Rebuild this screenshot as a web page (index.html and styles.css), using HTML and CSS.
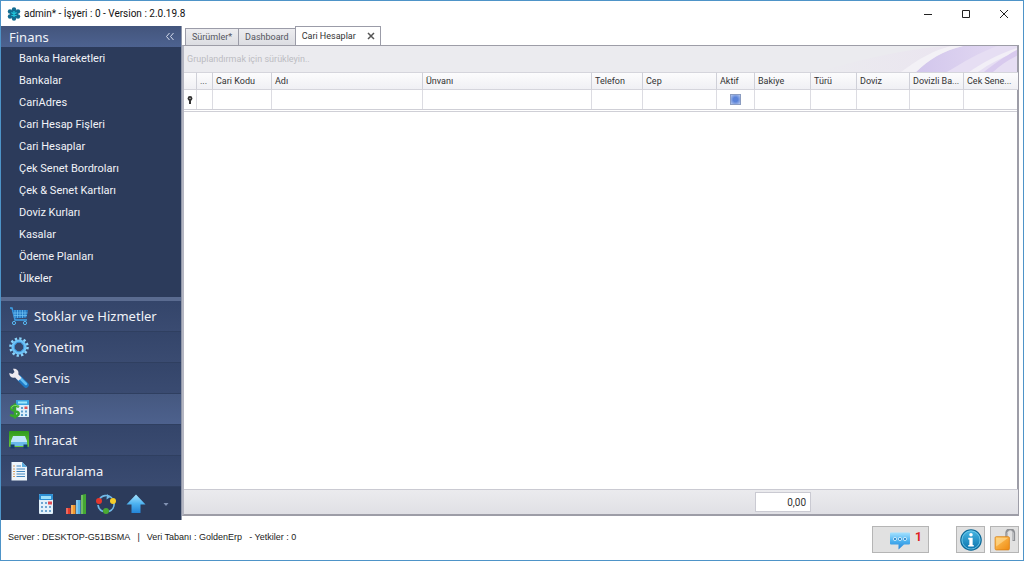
FILE: index.html
```html
<!DOCTYPE html>
<html lang="tr">
<head>
<meta charset="utf-8">
<meta name="viewport" content="width=device-width, initial-scale=1">
<title>admin* - İşyeri : 0 - Version : 2.0.19.8</title>
<link rel="stylesheet" href="styles.css">
</head>
<body>
<svg class="defs" aria-hidden="true">
  <defs>
    <linearGradient id="blue" x1="0" y1="0" x2="0" y2="1"><stop offset="0" stop-color="#a5e2ff"/><stop offset=".5" stop-color="#4db2f0"/><stop offset="1" stop-color="#2384d8"/></linearGradient>
    <linearGradient id="green" x1="0" y1="0" x2="0" y2="1"><stop offset="0" stop-color="#2f9a1c"/><stop offset="1" stop-color="#6cc93c"/></linearGradient>
    <linearGradient id="orange" x1="0" y1="0" x2="1" y2="1"><stop offset="0" stop-color="#ffc964"/><stop offset="1" stop-color="#f08a10"/></linearGradient>
    <linearGradient id="info" x1="0" y1="0" x2="0" y2="1"><stop offset="0" stop-color="#48b8e4"/><stop offset="1" stop-color="#0a72ac"/></linearGradient>
    <symbol id="calc" viewBox="0 0 16 20">
      <rect x="1" y="0" width="14" height="20" rx="1" fill="#e3f1fb"/>
      <rect x="1" y="0" width="14" height="6" rx="1" fill="#2d8fd4"/><rect x="3" y="2" width="10" height="3" fill="#9ee0fa"/>
      <path d="M3 8h2v2H3zM7 8h2v2H7zM3 12h2v2H3zM7 12h2v2H7zM11 12h2v2h-2zM3 16h2v2H3zM7 16h2v2H7zM11 16h2v2h-2z" fill="#6fa6d2"/>
      <path d="M10 7.500h4v3h-4z" fill="#e04a50"/>
    </symbol>
  </defs>
</svg>
<div class="window">
  <header class="titlebar">
    <svg class="logo" viewBox="0 0 14 14" aria-hidden="true"><g fill="#126c91"><circle cx="7" cy="2.500" r="2.200"/><circle cx="7" cy="11.500" r="2.200"/><circle cx="3" cy="4.500" r="2.200"/><circle cx="11" cy="4.500" r="2.200"/><circle cx="3" cy="9.500" r="2.200"/><circle cx="11" cy="9.500" r="2.200"/></g><circle cx="7" cy="7" r="4" fill="#126c91"/><path d="M7 4v6M4.400 5.500l5.200 3M9.600 5.500l-5.200 3" stroke="#20c5da" stroke-width="1.300"/></svg>
    <h1 class="title">admin* - İşyeri : 0 - Version : 2.0.19.8</h1>
    <div class="controls">
      <button class="control" aria-label="Simge durumuna küçült"><svg viewBox="0 0 10 10"><path d="M1 5.500h8"/></svg></button>
      <button class="control" aria-label="Ekranı kapla"><svg viewBox="0 0 10 10"><path d="M1.500 1.500h7v7h-7z"/></svg></button>
      <button class="control" aria-label="Kapat"><svg viewBox="0 0 10 10"><path d="M1 1l8 8M9 1l-8 8"/></svg></button>
    </div>
  </header>

  <div class="workspace">
    <aside class="sidebar">
      <div class="side-head"><h2 class="side-title">Finans</h2><button class="collapse" aria-label="Daralt"><svg viewBox="0 0 10 9"><path d="M4.500 1l-3 3.500 3 3.500M8.500 1l-3 3.500 3 3.500"/></svg></button></div>
      <nav class="side-list">
        <a class="side-link" href="#">Banka Hareketleri</a>
        <a class="side-link" href="#">Bankalar</a>
        <a class="side-link" href="#">CariAdres</a>
        <a class="side-link" href="#">Cari Hesap Fişleri</a>
        <a class="side-link" href="#">Cari Hesaplar</a>
        <a class="side-link" href="#">Çek Senet Bordroları</a>
        <a class="side-link" href="#">Çek &amp; Senet Kartları</a>
        <a class="side-link" href="#">Doviz Kurları</a>
        <a class="side-link" href="#">Kasalar</a>
        <a class="side-link" href="#">Ödeme Planları</a>
        <a class="side-link" href="#">Ülkeler</a>
      </nav>
      <div class="splitter"></div>
      <div class="groups">
        <button class="group"><svg class="group-icon" viewBox="0 0 20 20"><path d="M1 2h2l3 12h12" fill="none" stroke="#3fa3ea" stroke-width="1.400"/><path d="M3.500 4H19l-1.500 7.500-12 1z" fill="#2479c4"/><path d="M6 4v8M8.500 4v8M11 4v8M13.500 4v8M16 4v7.500M4 7h14.500M5 9.500h13" stroke="#72c5f7" stroke-width=".7"/><circle cx="5" cy="17" r="1.600" fill="none" stroke="#58b9f4"/><circle cx="16" cy="17" r="1.600" fill="none" stroke="#58b9f4"/></svg>Stoklar ve Hizmetler</button>
        <button class="group"><svg class="group-icon" viewBox="0 0 20 20"><circle cx="10" cy="10" r="8.500" fill="none" stroke="#8cd4fb" stroke-width="2.600" stroke-dasharray="2.300 2.150"/><circle cx="10" cy="10" r="6" fill="none" stroke="#6cc2f7" stroke-width="3.200"/><circle cx="10" cy="10" r="4.800" fill="none" stroke="#2f86d0" stroke-width=".8"/></svg>Yonetim</button>
        <button class="group"><svg class="group-icon" viewBox="0 0 20 20"><path d="M10 10l7 7" stroke="#1f78c4" stroke-width="5.500" stroke-linecap="round"/><path d="M10.500 9.500l6.500 6.500" stroke="#63bdf2" stroke-width="2.500" stroke-linecap="round"/><path d="M4 .8l1.500 3.300-2 1.800L.3 5C.2 8.500 3 10.500 6 9.600l3.500 3.200 3-3L9.300 6.200C10.300 3 7.500 0 4 .8z" fill="#eeeaf0"/></svg>Servis</button>
        <button class="group selected"><svg class="group-icon" viewBox="0 0 20 20"><path d="M7 1h13v17H7z" fill="#dceefa"/><path d="M7 1h13v5H7z" fill="#38a3e0"/><path d="M9 2.500h9v2H9z" fill="#9ee8fa"/><path d="M12 8h2v2h-2zM12 11.500h2v2h-2zM16 11.500h2v2h-2zM12 15h2v2h-2zM16 15h2v2h-2z" fill="#5b9dce"/><path d="M15.500 7.500h3v2.500h-3z" fill="#e05050"/><path d="M10 8C6.500 5.500 1.500 7 2.200 9.700s7.500 1.800 7.500 4.800-5.500 3.500-8.500 1.300M6 4.500v15" fill="none" stroke="#37a82b" stroke-width="2.500"/><path d="M9.500 7.300C6 5.300 1.800 7 3 9.600" fill="none" stroke="#9be57c" stroke-width=".8"/></svg>Finans</button>
        <button class="group"><svg class="group-icon" viewBox="0 0 20 20"><rect x="0" y="1" width="20" height="16" rx="1" fill="url(#green)"/><path d="M4 6h12l2 5v5H2v-5z" fill="#bfe6fa"/><path d="M2 12h16v4H2z" fill="#69b9e9"/><path d="M1.500 14.500h4v4h-4zM14.500 14.500h4v4h-4z" fill="#163e6a"/></svg>Ihracat</button>
        <button class="group"><svg class="group-icon" viewBox="0 0 20 20"><path d="M2.500 1H13l5 5v13.500H2.500z" fill="#eef5fb"/><path d="M13 1v5h5z" fill="#5daee0"/><path d="M7.500 5H12M7.500 8H16M7.500 10.500H16M7.500 13H16M7.500 15.500H16" stroke="#4387bf" stroke-width="1.200"/><path d="M4 5h2M4 8h2M4 10.500h2M4 13h2M4 15.500h2" stroke="#d39b60" stroke-width="1.200"/></svg>Faturalama</button>
      </div>
      <div class="shortcuts">
        <button class="shortcut" aria-label="Hesap makinesi"><svg viewBox="0 0 20 20"><use href="#calc" x="2" width="16" height="20"/></svg></button>
        <button class="shortcut" aria-label="Raporlar"><svg viewBox="0 0 20 20"><path d="M0 14h4.500v6H0z" fill="#e43829"/><path d="M5 11h4.500v9H5z" fill="#f3982b"/><path d="M10 6h4.500v14H10z" fill="#56b3e9"/><path d="M15 1l5-1v20h-5z" fill="#43a832"/><path d="M1 14v6M6 11v9M11 6v14M16 1v19" stroke="#fff" stroke-opacity=".5"/></svg></button>
        <button class="shortcut" aria-label="Süreçler"><svg viewBox="0 0 20 20"><path d="M3 6a8 8 0 0 1 13-2M18 9a8 8 0 0 1-5 8.500M7 17.500A8 8 0 0 1 2 11" fill="none" stroke="#72b9e7" stroke-width="1.700"/><path d="M11 0l3.500 3-4 2.500z" fill="#72b9e7"/><circle cx="3" cy="7" r="3" fill="#e5372c"/><circle cx="17" cy="7" r="3" fill="#f6cd28"/><circle cx="10" cy="17" r="3" fill="#4aaa33"/></svg></button>
        <button class="shortcut" aria-label="Güncelle"><svg viewBox="0 0 20 20"><path d="M10 .5l9.500 10H14.500V19h-9v-8.500H.5z" fill="url(#blue)"/></svg></button>
        <button class="shortcut more" aria-label="Diğer"><svg viewBox="0 0 20 20"><path d="M7.500 9h5L10 12z" fill="#8292b3"/></svg></button>
      </div>
    </aside>

    <main class="content">
      <div class="tabs" role="tablist">
        <button class="tab" role="tab">Sürümler*</button>
        <button class="tab" role="tab">Dashboard</button>
        <button class="tab active" role="tab" aria-selected="true">Cari Hesaplar<svg class="tab-close" viewBox="0 0 8 8"><path d="M1 1l6 6M7 1l-6 6"/></svg></button>
      </div>
      <section class="panel">
        <div class="group-panel"><span>Gruplandırmak için sürükleyin..</span>
          <svg class="swoosh" viewBox="0 0 200 27" preserveAspectRatio="none" aria-hidden="true">
            <defs><linearGradient id="haze"><stop offset="0" stop-color="#ebebef"/><stop offset="1" stop-color="#eae2f0"/></linearGradient><linearGradient id="violet"><stop offset="0" stop-color="#d2c6ec"/><stop offset="1" stop-color="#e5dcf3"/></linearGradient></defs>
            <path d="M0 27C50 12 90 3 130 0h70v27z" fill="url(#haze)"/>
            <path d="M99 27C112 14 126 5 146 0h54v27z" fill="url(#violet)"/>
            <path d="M99 27C112 14 126 5 146 0h-12C118 4 102 13 84 27z" fill="#f3f1f6"/>
            <path d="M130 27C146 17 160 8 180 0h20v27z" fill="#e6def3"/>
            <path d="M152 27C166 17 180 9 200 2v4C184 12 172 19 161 27z" fill="#f2eff7"/>
            <path d="M167 27C177 19 186 12 200 4v6C190 15 182 21 176 27z" fill="#d8caee"/>
          </svg>
        </div>
        <table class="grid">
          <colgroup><col class="c-mark"><col class="c-dots"><col class="c-code"><col class="c-name"><col class="c-title"><col class="c-phone"><col class="c-cell"><col class="c-active"><col class="c-balance"><col class="c-kind"><col class="c-currency"><col class="c-total"><col class="c-total"></colgroup>
          <thead><tr><th></th><th>...</th><th>Cari Kodu</th><th>Adı</th><th>Ünvanı</th><th>Telefon</th><th>Cep</th><th>Aktif</th><th>Bakiye</th><th>Türü</th><th>Doviz</th><th>Dovizli Ba...</th><th>Cek Sene...</th></tr></thead>
          <tbody><tr><td><svg class="pin" viewBox="0 0 6 8"><circle cx="3" cy="2.500" r="2.400" fill="#333"/><path d="M2 4h2v4H2z" fill="#333"/><circle cx="3" cy="2.300" r=".6" fill="#fff"/></svg></td><td></td><td></td><td></td><td></td><td></td><td></td><td class="check-cell"><input class="check" type="checkbox" aria-label="Aktif"></td><td></td><td></td><td></td><td></td><td></td></tr></tbody>
        </table>
        <div class="rows"></div>
        <table class="grid summary">
          <colgroup><col class="c-mark"><col class="c-dots"><col class="c-code"><col class="c-name"><col class="c-title"><col class="c-phone"><col class="c-cell"><col class="c-active"><col class="c-balance"><col class="c-kind"><col class="c-currency"><col class="c-total"><col class="c-total"></colgroup>
          <tbody><tr><td colspan="8"></td><td><div class="sum">0,00</div></td><td colspan="4"></td></tr></tbody>
        </table>
      </section>
    </main>
  </div>

  <footer class="status">
    <p class="status-text"><span>Server : DESKTOP-G51BSMA</span><span>|</span><span class="database">Veri Tabanı : GoldenErp</span><span>- Yetkiler : 0</span></p>
    <div class="status-actions">
      <button class="action messages" aria-label="Mesajlar: 1"><svg class="bubble" viewBox="0 0 20 20"><path d="M1 2.500h18a1 1 0 0 1 1 1v10a1 1 0 0 1-1 1h-5L8.500 19.500v-5H1a1 1 0 0 1-1-1v-10a1 1 0 0 1 1-1z" fill="url(#blue)"/><g fill="#2a83c4" stroke="#e3f6ff" stroke-width=".8"><circle cx="5" cy="9" r="1.600"/><circle cx="10" cy="9" r="1.600"/><circle cx="15" cy="9" r="1.600"/></g></svg><span class="count">1</span></button>
      <button class="action" aria-label="Bilgi"><svg viewBox="0 0 20 20"><circle cx="10" cy="10" r="9.300" fill="url(#info)" stroke="#0b6796"/><circle cx="10" cy="10" r="8.200" fill="none" stroke="#7cd0ee" stroke-width=".7"/><circle cx="10" cy="5.300" r="1.600" fill="#fff"/><path d="M7.500 8h4v6.500h1V16h-5v-1.500h1v-5h-1z" fill="#fff"/></svg></button>
      <button class="action" aria-label="Kilit"><svg viewBox="0 0 20 20"><path d="M11.500 8V3.500a3.200 3.200 0 0 1 6.500 0V11" fill="none" stroke="#8e9094" stroke-width="2.400"/><path d="M12 8V3.500a3 3 0 0 1 5.500 0V10" fill="none" stroke="#d5d6d8" stroke-width=".8"/><rect x="1" y="7" width="13" height="12" rx="1" fill="url(#orange)" stroke="#d98013" stroke-width=".7"/><path d="M2 8h11L2 16z" fill="#ffdf9c" opacity=".6"/></svg></button>
    </div>
  </footer>
</div>
</body>
</html>
```

FILE: styles.css
```css
* { box-sizing: border-box; }
body { margin: 0; font-family: Roboto, "Open Sans", sans-serif; font-size: 9px; color: #333; }
button { margin: 0; padding: 0; border: 0; background: none; font: inherit; color: inherit; }
svg { display: block; }
.defs { position: absolute; width: 0; height: 0; }

.window { display: flex; flex-direction: column; min-height: 100vh; border: 1px solid #4e94c8; background: #fff; }

.titlebar { display: flex; align-items: center; height: 25px; padding-left: 6px; }
.logo { width: 14px; height: 14px; }
.title { flex: 1; margin: 0 0 0 3px; font-size: 10px; font-weight: 400; color: #111; }
.controls { display: flex; }
.control { display: grid; place-items: center; width: 38px; height: 24px; }
.control svg { width: 10px; height: 10px; fill: none; stroke: #222; }

.workspace { flex: 1; display: flex; }
.sidebar { display: flex; flex-direction: column; width: 181px; border-right: 1px solid #8f96a8; background: #2c3b5b; color: #f1f3f8; }
.side-head { display: flex; align-items: center; justify-content: space-between; height: 21px; padding: 0 6px 0 8px; background: linear-gradient(#43557c, #4d6290); font-family: "Noto Sans", sans-serif; }
.side-title { margin: 0; font-size: 13px; font-weight: 400; }
.collapse svg { width: 10px; height: 9px; fill: none; stroke: #d6dceb; }
.side-list { flex: 1; display: flex; flex-direction: column; padding-top: 1px; }
.side-link { padding-left: 18px; font-size: 11px; line-height: 22px; color: inherit; text-decoration: none; }
.splitter { height: 4px; background: #5a6b90; }
.groups { display: flex; flex-direction: column; }
.group { display: flex; align-items: center; gap: 5px; height: 31px; padding-left: 8px; border-bottom: 1px solid #2f3f60; background: linear-gradient(#34456a, #3a4b71); font-family: "Noto Sans", sans-serif; font-size: 13px; }
.group.selected { background: linear-gradient(#455880, #4d618d); }
.group-icon { width: 20px; height: 20px; }
.shortcuts { display: flex; align-items: center; gap: 10px; height: 33px; padding: 0 6px 0 35px; }
.shortcut svg { width: 20px; height: 20px; }

.content { flex: 1; display: flex; flex-direction: column; min-width: 0; padding: 0 4px 4px 0; }
.tabs { display: flex; align-items: flex-end; height: 19px; padding-left: 3px; }
.tab { height: 17px; padding: 0 6px; border: 1px solid #9b9ca8; border-bottom: 0; border-right: 0; background: linear-gradient(#ededf0, #dcdde2); color: #55565e; }
.tab.active { display: flex; align-items: center; gap: 11px; height: 19px; padding: 0 5px 0 6px; border-right: 1px solid #9b9ca8; background: #fff; color: #333; }
.tab-close { width: 8px; height: 8px; fill: none; stroke: #555; stroke-width: 1.500; }
.panel { flex: 1; display: flex; flex-direction: column; border: 2px solid #9d9da7; border-top-width: 1px; border-left-color: #b4b6c2; }
.group-panel { display: flex; align-items: center; justify-content: space-between; height: 26px; padding-left: 3px; background: #ebebef; color: #bcbcc2; }
.swoosh { width: 200px; height: 26px; }

.grid { width: 100%; table-layout: fixed; border-collapse: separate; border-spacing: 0; }
.grid th { height: 18px; padding: 0 3px; border-right: 1px solid #cfd0d8; border-top: 1px solid #d5d5dc; border-bottom: 1px solid #d5d5dc; background: linear-gradient(#fcfcfd, #f0f0f4); font-weight: 400; text-align: left; white-space: nowrap; line-height: 16px; }
.grid td { height: 19px; padding: 0; border-right: 1px solid #dcdce2; }
.grid th:last-child, .grid td:last-child { border-right: 0; }
.c-mark { width: 13px; }
.c-dots { width: 16px; }
.c-code { width: 59px; }
.c-name { width: 151px; }
.c-title { width: 169px; }
.c-phone { width: 51px; }
.c-cell { width: 74px; }
.c-active { width: 38px; }
.c-balance { width: 56px; }
.c-kind { width: 46px; }
.c-currency { width: 53px; }
.c-total { width: 54px; }
.pin { width: 6px; height: 8px; margin: 0 auto; }
.check { display: block; width: 11px; height: 11px; margin: 0 auto; appearance: none; border: 1px solid #8b9cc0; background: radial-gradient(#5b83d8 35%, #b8c9ee); }
.rows { flex: 1; border-top: 3px double #cfcfd6; background: #fff; }
.summary { border-top: 1px solid #cacad2; background: linear-gradient(#ebebee, #e0e0e5); }
.summary td { height: 24px; border: 0; }
.sum { height: 20px; padding-right: 4px; border: 1px solid #cacad2; background: #fff; font-size: 10px; line-height: 20px; text-align: right; }

.status { display: flex; justify-content: space-between; height: 40px; padding: 6px 4px 0 7px; }
.status-text { display: flex; gap: 7px; margin: 0; font-family: "Liberation Sans", sans-serif; line-height: 22px; color: #222; }
.status-actions { display: flex; gap: 5px; }
.action { display: grid; place-items: center; width: 29px; height: 27px; border: 1px solid #b5b5b5; background: #e1e1e1; }
.action svg { width: 22px; height: 22px; }
.action.messages { display: flex; justify-content: flex-end; align-items: center; gap: 5px; width: 57px; margin-right: 22px; padding-right: 6px; }
.action .bubble { width: 20px; height: 20px; }
.count { align-self: flex-start; font-size: 12px; font-weight: 700; line-height: 20px; color: #e02020; }
```
